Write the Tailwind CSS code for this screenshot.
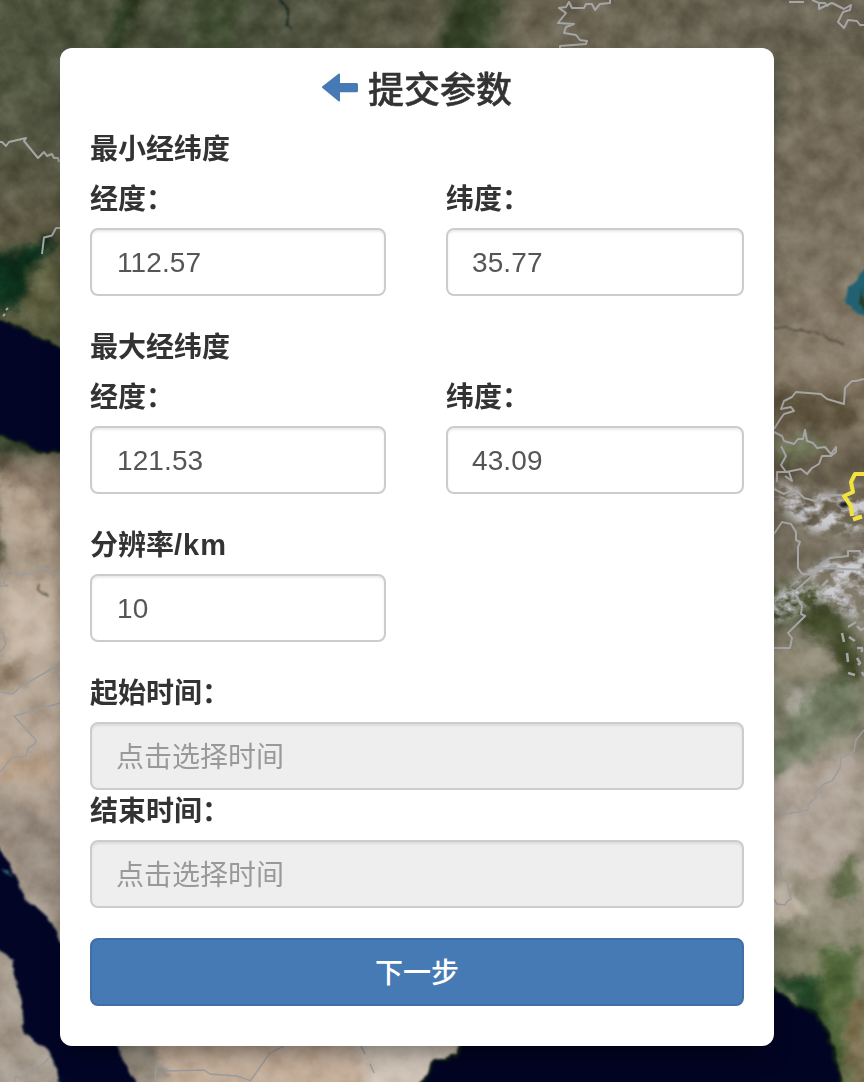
<!DOCTYPE html>
<html lang="zh-CN">
<head>
<meta charset="utf-8">
<title>提交参数</title>
<script src="https://cdn.jsdelivr.net/npm/@tailwindcss/browser@4"></script>
</head>
<body class="relative h-[1082px] w-[864px] overflow-hidden bg-[#6b6553] font-['Liberation_Sans','Noto_Sans_CJK_SC',sans-serif] text-[28px] leading-[40px] text-[#333]">
<!-- satellite map -->
<svg class="absolute inset-0" width="864" height="1082" viewBox="0 0 864 1082" aria-hidden="true">
  <defs>
    <linearGradient id="west" x1="0" y1="0" x2="0" y2="1">
      <stop offset="0" stop-color="#4e543f"/><stop offset=".12" stop-color="#535742"/><stop offset=".2" stop-color="#5d5944"/>
      <stop offset=".29" stop-color="#53563b"/><stop offset=".41" stop-color="#54503d"/><stop offset=".44" stop-color="#8b7b69"/>
      <stop offset=".55" stop-color="#b3a391"/><stop offset=".68" stop-color="#b9a999"/><stop offset=".78" stop-color="#a39587"/><stop offset="1" stop-color="#a79c90"/>
    </linearGradient>
    <linearGradient id="east" x1="0" y1="0" x2="0" y2="1">
      <stop offset="0" stop-color="#6c6554"/><stop offset=".13" stop-color="#736a59"/><stop offset=".24" stop-color="#7f7563"/><stop offset=".33" stop-color="#8c806e"/>
      <stop offset=".38" stop-color="#7c705b"/><stop offset=".43" stop-color="#665c4a"/><stop offset=".55" stop-color="#7e7868"/><stop offset=".65" stop-color="#7f806a"/>
      <stop offset=".72" stop-color="#a99f92"/><stop offset=".83" stop-color="#9c9584"/><stop offset=".92" stop-color="#747859"/><stop offset="1" stop-color="#68744d"/>
    </linearGradient>
    <linearGradient id="north" x1="0" y1="0" x2="1" y2="0">
      <stop offset="0" stop-color="#4f543f"/><stop offset=".3" stop-color="#4b503c"/><stop offset=".5" stop-color="#5a5745"/><stop offset=".56" stop-color="#404b31"/>
      <stop offset=".6" stop-color="#6c6554"/><stop offset="1" stop-color="#696353"/>
    </linearGradient>
    <filter id="soft" x="-5%" y="-5%" width="110%" height="110%">
      <feGaussianBlur stdDeviation="5" result="b"/>
      <feTurbulence type="fractalNoise" baseFrequency=".05" numOctaves="4" seed="4" result="n"/>
      <feDisplacementMap in="b" in2="n" scale="30" xChannelSelector="R" yChannelSelector="G" color-interpolation-filters="sRGB"/>
    </filter>
    <filter id="coast" x="-5%" y="-5%" width="110%" height="110%" color-interpolation-filters="sRGB">
      <feTurbulence type="fractalNoise" baseFrequency=".09" numOctaves="2" seed="8" result="n"/>
      <feDisplacementMap in="SourceGraphic" in2="n" scale="7" xChannelSelector="R" yChannelSelector="G"/>
      <feGaussianBlur stdDeviation=".9"/>
    </filter>
    <filter id="grain" x="0" y="0" width="100%" height="100%" color-interpolation-filters="sRGB">
      <feTurbulence type="fractalNoise" baseFrequency=".04" numOctaves="5" seed="21"/>
      <feColorMatrix values="1.2 0 0 0 -.1  1.2 0 0 0 -.1  1.2 0 0 0 -.1  0 0 0 0 1"/>
      <feGaussianBlur stdDeviation=".7"/>
    </filter>
    <filter id="snow" x="-10%" y="-10%" width="120%" height="120%" color-interpolation-filters="sRGB">
      <feTurbulence type="fractalNoise" baseFrequency=".06 .08" numOctaves="5" seed="5"/>
      <feColorMatrix values="0 0 0 0 .8  0 0 0 0 .8  0 0 0 0 .82  3.5 0 0 0 -1.3"/>
      <feGaussianBlur stdDeviation=".7" result="s"/>
      <feGaussianBlur in="SourceAlpha" stdDeviation="6" result="m"/>
      <feComposite in="s" in2="m" operator="in"/>
    </filter>
  </defs>
  <rect width="430" height="1082" fill="url(#west)"/>
  <rect x="430" width="434" height="1082" fill="url(#east)"/>
  <rect width="864" height="56" fill="url(#north)"/>
  <g filter="url(#soft)">
    <path d="M138 -10h14l-14 32-10 40h-14l8-40z" fill="#2e3d21"/>
    <path d="M205 0h45l-10 60h-45z" fill="#3e492f"/>
    <path d="M465 -10h45l-22 75h-45z" fill="#364328"/>
    <path d="M-10 262L20 260 60 244v16L42 278 36 300 20 316-10 314z" fill="#10301a"/>
    <path d="M42 275l20-10v72l-30-16z" fill="#5f6140"/>
    <path d="M-10 432l70 14v14H10L-10 452z" fill="#34402a"/>
    <path d="M-10 458L8 470 10 570-10 600z" fill="#55553e"/>
    <path d="M0 480l30 10 30 30v30H10z" fill="#b3a28e"/>
    <path d="M12 590h48v70H16z" fill="#c6b6a5"/>
    <path d="M0 665l28 8 4 20H0z" fill="#95836e"/>
    <path d="M0 760h60v30H0z" fill="#bba48e"/>
    <path d="M0 800l60 30v80L40 905 10 850z" fill="#998d81"/>
    <path d="M120 1040h350v60H130z" fill="#c4af9b"/>
    <path d="M360 1040h105l-20 60h-70z" fill="#d0c4b8"/>
    <path d="M110 1040h50l15 50h-40z" fill="#948b7d"/>
    <path d="M774 60h16v80h-16z" fill="#5f5d4b"/>
    <path d="M774 395l40 5 50 8v30l-90-10z" fill="#5d523e"/>
    <path d="M776 452l38-12 20 10-22 16-34 4z" fill="#73795c"/>
    <path d="M770 590h50l44 50v60h-24l-30-70-34 6z" fill="#46502f"/>
    <path d="M774 650h60l10 30-70 14z" fill="#8f8975"/>
    <path d="M796 695l20 0-8 30-14 18z" fill="#b0aca2"/>
    <path d="M820 690h44v40l-84 55-6-20z" fill="#717a60"/>
    <path d="M774 795l40-20 50-15v90l-20 40-70-20z" fill="#b0a498"/>
    <path d="M838 880l26-25v50h-26z" fill="#65704e"/>
    <path d="M774 895h20l16 25-20 10-16-10z" fill="#c3b8a9"/>
    <path d="M774 930h35v60h-35z" fill="#74765d"/>
    <path d="M830 955h34v20l-20 107h-24l6-70z" fill="#506537"/>
    <path d="M774 985l52-4 4 60-30-30z" fill="#254a2c"/>
    <path d="M852 1005h20v90h-16z" fill="#7d7050"/>
  </g>
  <rect width="864" height="1082" filter="url(#grain)" class="opacity-40 mix-blend-soft-light"/>
  <path d="M774 482l30 8 30 6 40-10v44l-60 4-20-14-20-22z" filter="url(#snow)"/>
  <path d="M800 574l30-16 44-14v74l-26 0-30-20-18 14-30 14v-28z" filter="url(#snow)"/>
  <g filter="url(#coast)">
    <path d="M-10 318L13 324 33 336 60 348 90 360V452H40L20 441-10 432z" fill="#020526" stroke="#0c1a18" stroke-width="2"/>
    <path d="M-10 840L0 849 7 861 17 877 25 899 43 912 53 925 62 943 116 1046 142 1092H64L50 1052 24 1034 22 1003 17 982 12 960-10 944z" fill="#020526" stroke="#6b7471" stroke-width="1"/>
    <path d="M460 1040L457 1055 446 1059 432 1062 430 1072 417 1092H844L836 1062 827 1031 814 1013 797 1005 774 989z" fill="#020423" stroke="#0b1b16" stroke-width="3"/>
    <path d="M868 264L858 280 848 288 844 300 852 309 860 315 868 318z" fill="#216171"/>
    <path d="M864 285l-4 18 4 10z" fill="#253b21"/>
    <path d="M3 868l6 2 5 7-6-2z" fill="#2c5968"/>
    <path d="M280 0l8 10-1 16 6 3" fill="none" stroke="#1c2b24" stroke-width="2.5"/>
    <path d="M40 585l-1 5 9 7M774 327l40 5 30 12" fill="none" stroke="#4c4b38" stroke-width="1.5"/>
    <path d="M843 502l2 5" stroke="#202024" stroke-width="6"/>
  </g>
  <!-- borders -->
  <g fill="none" stroke="#a5a5a6" stroke-width="2" stroke-linejoin="round">
    <path d="M0 142l2 0 4 4 3-4 17-4-2 3 14 17 6-6 3 4 5-2 2 4 4 0 1 4M60 228h-4l-4 7.500-8 2-2 16.500"/>
    <path d="M8 308l-2 2M5 314l-2 2"/>
    <path d="M610 0v3l-10 1-5 6-3-6h-6l-2 4h-12l-3-6-3 5-7 1 7 5-8 10 16 1-8 3-2 6 12 2 4 5 7 1-1 3-26 2v2"/>
    <path d="M789 2h15M812 0l7 3v6l8-4 5-2 12 6 7-4-1 5-7 2-5 10 6 6 4-8 9 1 3 4h4M819 3l6 0 2 3 4-3"/>
    <path d="M864 379l-4 1-4 1-4 0-7 7-1 16-17-5-6-5-25-2-4 5-8 4-3 8 10-2 3 4-10 3-3 4-7 11"/>
    <path d="M774 432l8 4 2 5 10 3 4-5 5 0 2-9 2 11 6 2 4 5 8-1 6 7 5-7 0 5-5 4-9 0-3 8-7 4-5 6-6-5-15 3-5-7 5-9-5-10"/>
    <path d="M777 482v-10h12l3 9-7-5M774 489l10 5 6-3 7 0 7 7 12 3 5-5 21-1"/>
    <path d="M774 534l8-12 9 2 5 8v8l4 2-2 5v21l4 6 8 0 20-16 18-2v-5h12l1 4 12-2 4-3M864 570l-43-2-27 24 8 14-1 8 4 2-17 17 4 5-2 10h-16"/>
    <path d="M822 586l6-6M824 596h8M835 572h9M837 603l9 2M850 609l1 6 5 0M848 627l8-5M857 626l4 4 3-2M842 633l2 9M849 637l6 4M857 648h5v4M847 653l1 9M857 658l3 5-2 2M848 673l7 2M862 672l2 4" stroke-width="2.5"/>
    <g stroke-width="1.500" stroke="#9b9c9d">
      <path d="M0 586h8l-4-3v-8l3-5 9 2 1 4 18-3.500 4-4.500 8 1 6 4.500h7M0 632l3 1 3 11-6 8M0 692l13 2 7-7 35-20 5-6M55 667l5 16M60 703l-46 13 22 24-1 4-7 4-2 8-15 2-6 8-5 6"/>
      <path d="M50 1057l-10 10-7-1-8 6-3 6-7-1v5M284 1046l-14 7-19 27M251 1081l-14-5-27-2-6-4-36 1-7-5h-5l-1 16M361 1046l4 8M370 1064l4 9"/>
      <path d="M864 730l-8 10-2 11-13 7-1 10-8 13-8 3-8 8v5l-8 8v5l-26 5-2-7-6-2M774 867h6l1 10 6 5 4 17-4 2-2 4-8-1-3-5"/>
    </g>
    <path d="M864 474h-9l-4 8 2 10-9 4 7 10 1 10M853 519.500l9-3" stroke="#f1e240" stroke-width="4"/>
  </g>
</svg>

<main class="relative mt-12 ml-[60px] flex h-[998px] w-[714px] flex-col rounded-xl bg-white px-[30px] pt-[22px] shadow-[0_14px_24px_-10px_rgba(0,0,0,0.5)]">
  <h1 class="mb-5 flex h-10 items-center justify-center text-[36px] leading-[40px] font-bold">
    <svg class="mt-[-5px] mr-[10px] shrink-0" width="36" height="30" viewBox="0 0 36 30" fill="#467ab4" aria-label="返回"><path d="M0 14.200Q0 13.700.5 13.300L16.500.7Q18 0 18 1.500V10H34.500Q36 10 36 11.500V18Q36 19.300 34.500 19.300H18V27.500Q18 29.200 16.500 28.300L.5 15.100Q0 14.700 0 14.200Z"/></svg>
    <span class="relative top-px font-medium [-webkit-text-stroke:0.5px_#333]">提交参数</span>
  </h1>

  <h2 class="mb-[10px] font-bold">最小经纬度</h2>
  <div class="mb-8 flex gap-[60px]">
    <label class="flex w-[296px] flex-col gap-2 font-bold">经度：
      <input class="h-[68px] w-full rounded-lg border-2 border-[#ccc] bg-white px-[25px] pt-0.5 font-normal tracking-[0.1px] text-[#555] shadow-[inset_0_2px_2px_rgba(0,0,0,0.075)]" value="112.57"></label>
    <label class="flex w-[298px] flex-col gap-2 font-bold">纬度：
      <input class="h-[68px] w-full rounded-lg border-2 border-[#ccc] bg-white px-6 pt-0.5 font-normal tracking-[0.1px] text-[#555] shadow-[inset_0_2px_2px_rgba(0,0,0,0.075)]" value="35.77"></label>
  </div>

  <h2 class="mb-[10px] font-bold">最大经纬度</h2>
  <div class="mb-[31px] flex gap-[60px]">
    <label class="flex w-[296px] flex-col gap-2 font-bold">经度：
      <input class="h-[68px] w-full rounded-lg border-2 border-[#ccc] bg-white px-[25px] pt-0.5 font-normal tracking-[0.1px] text-[#555] shadow-[inset_0_2px_2px_rgba(0,0,0,0.075)]" value="121.53"></label>
    <label class="flex w-[298px] flex-col gap-2 font-bold">纬度：
      <input class="h-[68px] w-full rounded-lg border-2 border-[#ccc] bg-white px-6 pt-0.5 font-normal tracking-[0.1px] text-[#555] shadow-[inset_0_2px_2px_rgba(0,0,0,0.075)]" value="43.09"></label>
  </div>

  <label class="mb-[30px] flex w-[296px] flex-col gap-[9px] font-bold"><span class="h-10">分辨率<span class="text-[29px] tracking-[1px]">/km</span></span>
    <input class="h-[68px] w-full rounded-lg border-2 border-[#ccc] bg-white px-[25px] pt-0.5 font-normal tracking-[0.1px] text-[#555] shadow-[inset_0_2px_2px_rgba(0,0,0,0.075)]" value="10"></label>

  <label class="flex flex-col gap-[10px] pt-0.5 font-bold"><span class="h-[38px]">起始时间：</span>
    <input readonly class="h-[68px] w-full rounded-lg border-2 border-[#ccc] bg-[#eee] px-6 pt-1 font-normal shadow-[inset_0_2px_2px_rgba(0,0,0,0.075)] placeholder:text-[#999]" placeholder="点击选择时间"></label>
  <label class="mb-[30px] flex flex-col gap-[10px] pt-0.5 font-bold"><span class="h-[38px]">结束时间：</span>
    <input readonly class="h-[68px] w-full rounded-lg border-2 border-[#ccc] bg-[#eee] px-6 pt-1 font-normal shadow-[inset_0_2px_2px_rgba(0,0,0,0.075)] placeholder:text-[#999]" placeholder="点击选择时间"></label>

  <button class="h-[68px] w-full rounded-lg border-2 border-[#406ea5] bg-[#467ab4] pt-1 font-medium text-white">下一步</button>
</main>
</body>
</html>
